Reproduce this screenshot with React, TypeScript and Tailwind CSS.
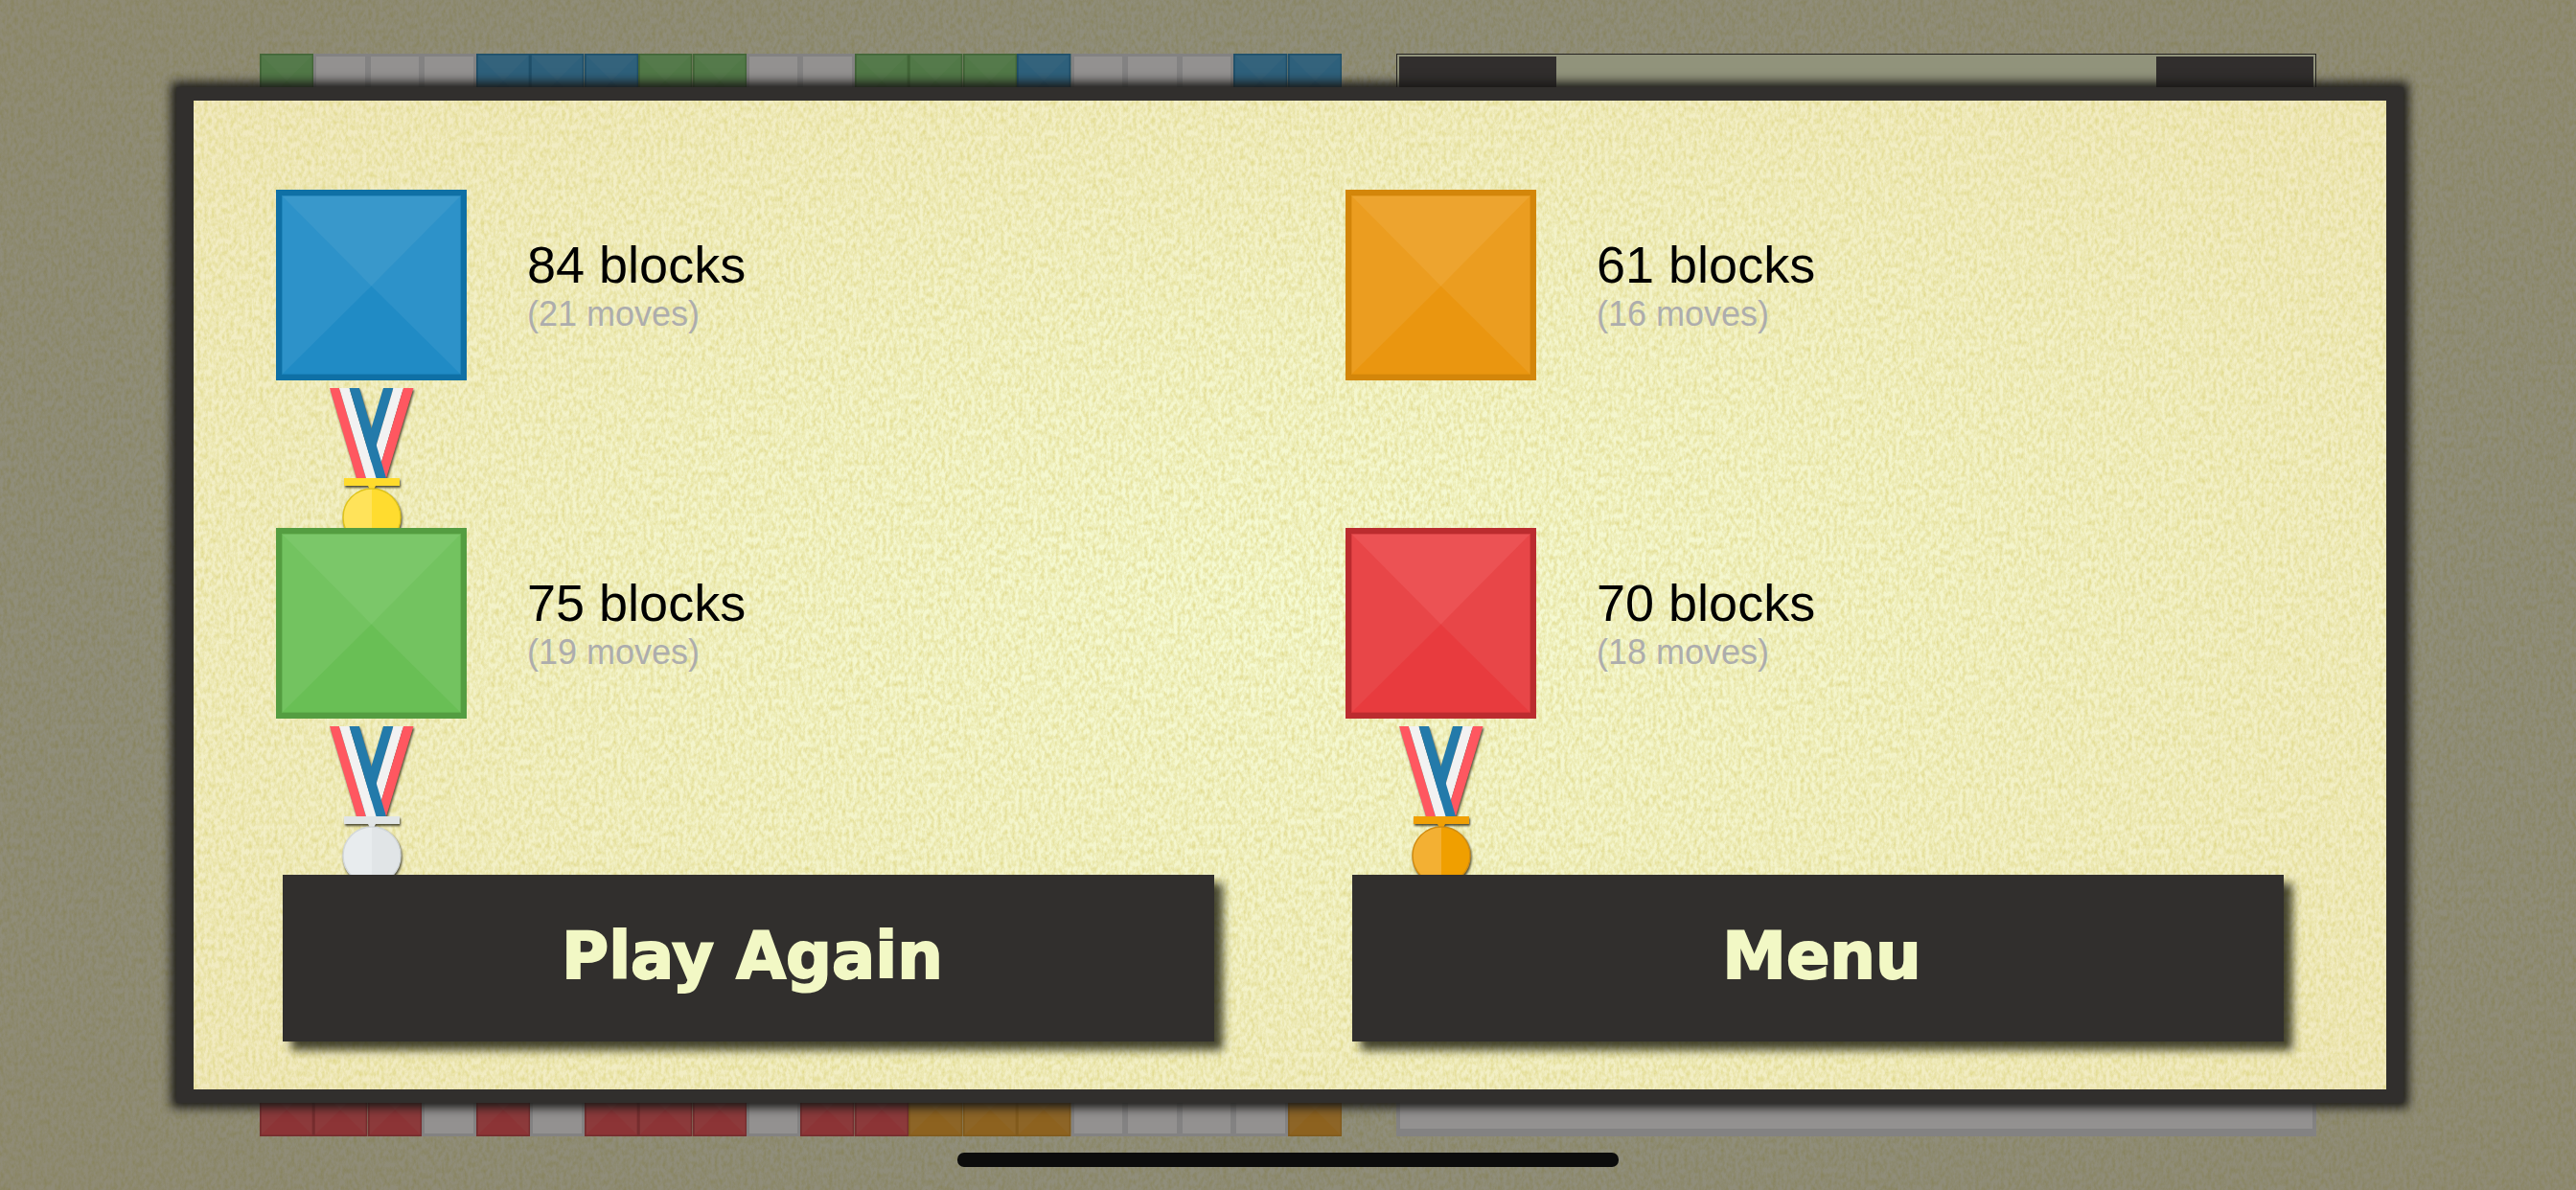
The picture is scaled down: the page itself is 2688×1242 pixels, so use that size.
type Tone = "blue" | "green" | "orange" | "red";

type Cell = Tone | "empty";

const TONES: Record<Tone, { edge: string; top: string; side: string; bottom: string }> = {
  blue: { edge: "#0f70a5", top: "#3998cb", side: "#2d92c9", bottom: "#208bc5" },
  green: { edge: "#549d41", top: "#7bc769", side: "#73c360", bottom: "#69bf55" },
  orange: { edge: "#d3860a", top: "#eda42f", side: "#eb9d20", bottom: "#ea9610" },
  red: { edge: "#bb2c2f", top: "#ec5254", side: "#e84648", bottom: "#e83b3e" },
};

const MEDALS = {
  gold: { bar: "#ffdb2c", left: "#ffe35a", right: "#ffdc2f", rim: "#dfc41c" },
  silver: { bar: "#e1e5e6", left: "#e8ecee", right: "#e1e5e7", rim: "#d3d8db" },
  bronze: { bar: "#f0a005", left: "#f3b033", right: "#f09f00", rim: "#d28d10" },
};

type Score = {
  tone: Tone;
  blocks: number;
  moves: number;
  medal?: keyof typeof MEDALS;
};

const scores: Score[] = [
  { tone: "blue", blocks: 84, moves: 21, medal: "gold" },
  { tone: "orange", blocks: 61, moves: 16 },
  { tone: "green", blocks: 75, moves: 19, medal: "silver" },
  { tone: "red", blocks: 70, moves: 18, medal: "bronze" },
];

const run = (cell: Cell, length: number): Cell[] => Array(length).fill(cell);

const topRow: Cell[] = [
  ...run("green", 1),
  ...run("empty", 3),
  ...run("blue", 3),
  ...run("green", 2),
  ...run("empty", 2),
  ...run("green", 3),
  ...run("blue", 1),
  ...run("empty", 3),
  ...run("blue", 2),
];

const bottomRow: Cell[] = [
  ...run("red", 3),
  ...run("empty", 1),
  ...run("red", 1),
  ...run("empty", 1),
  ...run("red", 3),
  ...run("empty", 1),
  ...run("red", 2),
  ...run("orange", 3),
  ...run("empty", 4),
  ...run("orange", 1),
];

export default function App() {
  return (
    <div className="relative isolate flex min-h-screen flex-col overflow-hidden pt-[91px] pr-[180px] pb-[91px] pl-[184px] font-['Liberation_Sans',Arial,sans-serif]">
      <GameBehind />
      <ResultsDialog />
      <div className="absolute bottom-6 left-1/2 h-[15px] w-[690px] -translate-x-1/2 rounded-[7px] bg-[#0c0c0c]" />
    </div>
  );
}

const ResultsDialog = () => {
  return (
    <main className="relative isolate flex flex-1 flex-col border-x-[18px] border-y-[14px] border-[#312f2d] bg-[radial-gradient(ellipse_at_center,#f6fbd4_0%,#f4f5cc_40%,#f1e9bf_100%)] pr-[100px] pl-[86px] shadow-[0_0_10px_5px_#1a1917]">
      <Paper id="dialog-paper" />

      <div className="grid grid-cols-2 gap-x-[130px] pt-[93px]">
        {scores.map((score) => (
          <ScoreItem key={score.tone} {...score} />
        ))}
      </div>

      <div className="relative mt-[9px] grid grid-cols-2 gap-x-[144px] px-[7px]">
        <DialogButton label="Play Again" />
        <DialogButton label="Menu" />
      </div>
    </main>
  );
};

const ScoreItem = ({ tone, blocks, moves, medal }: Score) => {
  return (
    <div className="relative h-[353px]">
      <div className="flex items-start gap-[63px]">
        <Block tone={tone} className="size-[199px] shrink-0" />
        <div className="pt-[48px]">
          <p className="text-[54px] leading-[60px] text-black">{blocks} blocks</p>
          <p className="text-[36px] leading-[44px] text-[#adadad]">({moves} moves)</p>
        </div>
      </div>
      {medal && <Medal kind={medal} />}
    </div>
  );
};

const DialogButton = ({ label }: { label: string }) => {
  return (
    <button
      type="button"
      className="h-[174px] bg-[#312f2d] pb-1 pl-2 font-['DejaVu_Sans','Liberation_Sans',sans-serif] text-[67px] leading-[80px] font-bold text-[#f2f8c5] shadow-[9px_9px_9px_rgba(25,25,10,0.8)] [-webkit-text-stroke:2px_#f2f8c5]"
    >
      {label}
    </button>
  );
};

const Block = ({ tone, className }: { tone: Tone; className?: string }) => {
  const { edge, top, side, bottom } = TONES[tone];

  return (
    <svg viewBox="0 0 200 200" preserveAspectRatio="none" className={className}>
      <rect width="200" height="200" fill={edge} />
      <rect x="6" y="6" width="188" height="188" fill={side} />
      <path d="M6 6H194L100 101Z" fill={top} />
      <path d="M6 194H194L100 101Z" fill={bottom} />
      <rect x="6.5" y="6.5" width="187" height="187" fill="none" stroke={edge} strokeOpacity="0.4" />
    </svg>
  );
};

const Medal = ({ kind }: { kind: keyof typeof MEDALS }) => {
  const { bar, left, right, rim } = MEDALS[kind];

  return (
    <svg
      viewBox="0 0 92 170"
      className="mt-2 ml-[56px] h-[170px] w-[92px] drop-shadow-[1px_2px_1px_rgba(40,38,20,0.8)]"
    >
      {/* back ribbon */}
      <path d="M56 0H66.500L38.500 94H28Z" fill="#237aaa" />
      <path d="M66.500 0H77L49 94H38.500Z" fill="#f2f2f2" />
      <path d="M77 0H87.500L59 94H49Z" fill="#ff5760" />
      {/* front ribbon */}
      <path d="M0 0H10L38 94H28Z" fill="#ff5760" />
      <path d="M10 0H20.500L48.500 94H38Z" fill="#f2f2f2" />
      <path d="M20.500 0H31L59 94H48.500Z" fill="#237aaa" />
      {/* bar and disc */}
      <path d="M15 94H73V102H48L46 106H42L40 102H15Z" fill={bar} />
      <circle cx="44" cy="135" r="30" fill={right} />
      <path d="M44 105A30 30 0 0 0 44 165Z" fill={left} />
      <circle cx="44" cy="135" r="30" fill="none" stroke={rim} strokeWidth="1.500" />
    </svg>
  );
};

const GameBehind = () => {
  return (
    <div
      aria-hidden="true"
      className="absolute inset-0 isolate -z-10 bg-[radial-gradient(ellipse_at_center,#f4f9cf_0%,#f1f0cd_60%,#efe8bd_100%)]"
    >
      <Paper id="page-paper" />
      <div className="flex h-full justify-center gap-[57px] py-14">
        <div className="flex w-[42%] flex-col justify-between">
          <BoardRow cells={topRow} />
          <BoardRow cells={bottomRow} />
        </div>

        <div className="flex w-[960px] flex-col justify-between">
          <div className="flex h-14 justify-between border border-b-0 border-[#1a1815] bg-[#f3f8c8] px-[2px] pt-[2px]">
            <div className="w-[164px] bg-[#322e2d]" />
            <div className="w-[164px] bg-[#322e2d]" />
          </div>
          <div className="h-14 border-x-4 border-b-8 border-[#d6d6d6] bg-[#f7f5f2]" />
        </div>
      </div>
      <div className="absolute inset-0 bg-[#302e2d]/50" />
    </div>
  );
};

const BoardRow = ({ cells }: { cells: Cell[] }) => {
  return (
    <div className="grid grid-cols-20">
      {cells.map((cell, i) =>
        cell === "empty" ? (
          <div key={i} className="h-14 border-[3px] border-[#d6d6d6] bg-[#f7f5f2]" />
        ) : (
          <Block key={i} tone={cell} className="h-14 w-full" />
        ),
      )}
    </div>
  );
};

// Fibrous paper grain, laid over whatever background the parent has
const Paper = ({ id }: { id: string }) => {
  return (
    <svg aria-hidden="true" className="absolute inset-0 -z-10 size-full">
      <filter id={id} x="0" y="0" width="100%" height="100%" colorInterpolationFilters="sRGB">
        <feTurbulence type="fractalNoise" baseFrequency="0.26 0.16" numOctaves="3" seed="4" />
        <feColorMatrix values="0 0 0 0 0.87  0 0 0 0 0.84  0 0 0 0 0.52  1.5 0 0 0 -0.5" />
      </filter>
      <rect width="100%" height="100%" filter={`url(#${id})`} />
    </svg>
  );
};
